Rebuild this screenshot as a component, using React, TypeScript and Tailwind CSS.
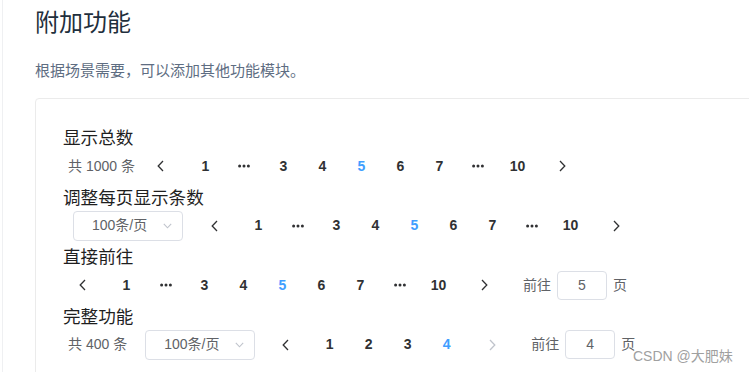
import { type ReactNode } from 'react';

type PagerItem = number | 'more';

const PAGES_10: PagerItem[] = [1, 'more', 3, 4, 5, 6, 7, 'more', 10];
const PAGES_4: PagerItem[] = [1, 2, 3, 4];

function ChevronLeft({ disabled }: { disabled?: boolean }) {
  return (
    <svg width="7" height="12" viewBox="0 0 7 12" fill="none">
      <path d="M6 1 L1.2 6 L6 11" stroke={disabled ? '#c0c4cc' : '#303133'} strokeWidth="1.3" />
    </svg>
  );
}

function ChevronRight({ disabled }: { disabled?: boolean }) {
  return (
    <svg width="7" height="12" viewBox="0 0 7 12" fill="none">
      <path d="M1 1 L5.8 6 L1 11" stroke={disabled ? '#c0c4cc' : '#303133'} strokeWidth="1.3" />
    </svg>
  );
}

function More() {
  return (
    <svg width="12" height="4" viewBox="0 0 12 4">
      <circle cx="1.6" cy="2" r="1.5" fill="#303133" />
      <circle cx="6" cy="2" r="1.5" fill="#303133" />
      <circle cx="10.4" cy="2" r="1.5" fill="#303133" />
    </svg>
  );
}

function Pager({ pages, current, lastDisabled }: { pages: PagerItem[]; current: number; lastDisabled?: boolean }) {
  return (
    <>
      <div className="flex h-[30px] w-[39px] shrink-0 items-center justify-center pr-[11px]">
        <ChevronLeft />
      </div>
      {pages.map((p, i) => (
        <div
          key={i}
          className={[
            'flex h-[30px] w-[39px] shrink-0 items-center justify-center text-[14px] font-bold',
            p === current ? 'text-[#409eff]' : 'text-[#303133]',
          ].join(' ')}
        >
          {p === 'more' ? <More /> : p}
        </div>
      ))}
      <div className="flex h-[30px] w-[39px] shrink-0 items-center justify-center pl-[13px]">
        <ChevronRight disabled={lastDisabled} />
      </div>
    </>
  );
}

function SizeSelect({ className }: { className: string }) {
  return (
    <div
      className={`flex h-[30px] w-[110px] shrink-0 items-center justify-between rounded-[4px] border border-[#dcdfe6] pl-[18px] pr-[10px] text-[14px] text-[#606266] ${className}`}
    >
      <span>100条/页</span>
      <svg width="9" height="6" viewBox="0 0 9 6" fill="none">
        <path d="M0.8 0.8 L4.5 4.8 L8.2 0.8" stroke="#c0c4cc" strokeWidth="1.1" />
      </svg>
    </div>
  );
}

function Jumper({ value }: { value: number }) {
  return (
    <div className="ml-[26px] flex items-center text-[14px] text-[#606266]">
      <span>前往</span>
      <div className="mx-[6px] flex h-[29px] w-[50px] items-center justify-center rounded-[4px] border border-[#dcdfe6]">
        {value}
      </div>
      <span>页</span>
    </div>
  );
}

function Block({ title, children }: { title: string; children: ReactNode }) {
  return (
    <div className="mb-[3.5px]">
      <div className="h-[26px] text-[17.6px] leading-[26px] text-[#1f1f1f]">{title}</div>
      <div className="flex h-[30px] items-center pl-[5px]">{children}</div>
    </div>
  );
}

export default function App() {
  return (
    <div
      className="relative h-[372px] w-[749px] overflow-hidden bg-white"
      style={{ fontFamily: '"Liberation Sans", "Noto Sans CJK SC", sans-serif' }}
    >
      <div className="ml-[2px] h-full border-l border-[#eff0f2] pl-[32px] pt-[7px]">
        <h3 className="text-[24px] leading-[32px] font-normal text-[#1f2f3d]">附加功能</h3>
        <p className="mt-[21px] text-[15px] leading-[22px] text-[#5e6d82]">根据场景需要，可以添加其他功能模块。</p>

        {/* Demo card */}
        <div className="mt-[16px] w-[800px] rounded-[4px] border border-[#ebebeb] pb-[60px] pl-[27px] pt-[26px]">
          <Block title="显示总数">
            <span className="mr-[12px] text-[14px] text-[#606266]">共 1000 条</span>
            <Pager pages={PAGES_10} current={5} />
          </Block>

          <Block title="调整每页显示条数">
            <SizeSelect className="ml-[5px] mr-[17px]" />
            <Pager pages={PAGES_10} current={5} />
          </Block>

          <Block title="直接前往">
            <Pager pages={PAGES_10} current={5} />
            <Jumper value={5} />
          </Block>

          <Block title="完整功能">
            <span className="mr-[12px] text-[14px] text-[#606266]">共 400 条</span>
            <SizeSelect className="ml-[6px] mr-[16px]" />
            <Pager pages={PAGES_4} current={4} lastDisabled />
            <Jumper value={4} />
          </Block>
        </div>
      </div>

      {/* Watermark */}
      <div className="absolute left-[633px] top-[348px] text-[14px] leading-[16px] text-[#a0a0a0]">CSDN @大肥妹</div>
    </div>
  );
}
